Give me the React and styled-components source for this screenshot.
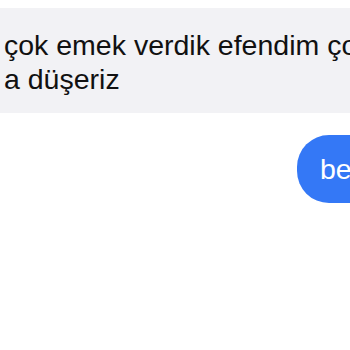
import styled, { createGlobalStyle } from 'styled-components'

const GlobalStyle = createGlobalStyle`
  html, body {
    margin: 0;
    padding: 0;
    background: #ffffff;
  }
  body {
    font-family: "Liberation Sans", Arial, sans-serif;
  }
`;

const Thread = styled.div`
  width: 350px;
  height: 350px;
  overflow: hidden;
  display: flex;
  flex-direction: column;
  padding-top: 8px;
  box-sizing: border-box;
`;

const Incoming = styled.div`
  background: #f2f2f5;
  padding: 20px 0 17px 4px;
  font-size: 28.5px;
  line-height: 34px;
  color: #111111;
  white-space: nowrap;
  overflow: hidden;
`;

const Line = styled.div``;

const Row = styled.div`
  display: flex;
  margin-top: 22px;
  padding-left: 297px;
`;

const Outgoing = styled.div`
  flex-shrink: 0;
  background: #3478f6;
  color: #ffffff;
  height: 68px;
  border-radius: 32px;
  padding: 0 24px 0 23px;
  font-size: 28.5px;
  line-height: 68px;
  white-space: nowrap;
`;

const App = () => {
  return (
    <>
      <GlobalStyle />
      <Thread>
        <Incoming>
          <Line>çok emek verdik efendim çok</Line>
          <Line>a düşeriz</Line>
        </Incoming>
        <Row>
          <Outgoing>bence de</Outgoing>
        </Row>
      </Thread>
    </>
  )
}

export default App;
